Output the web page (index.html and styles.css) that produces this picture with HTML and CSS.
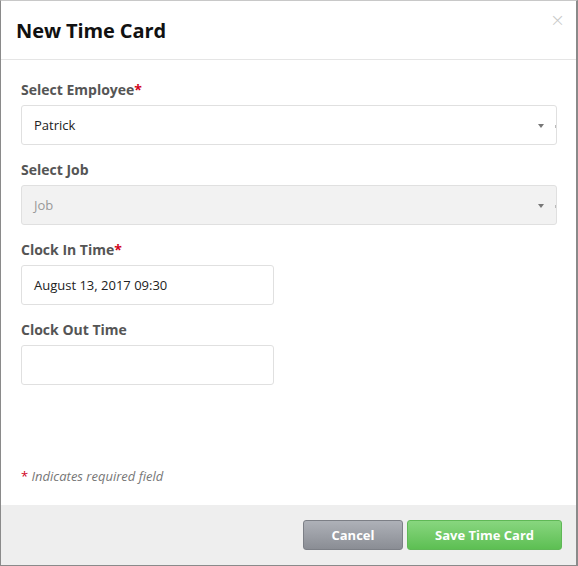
FILE: index.html
```html
<!DOCTYPE html>
<html>
<head>
<meta charset="utf-8">
<link rel="stylesheet" href="styles.css">
</head>
<body>
<div class="modal">
  <div class="modal-header">
    <h1 class="title">New Time Card</h1>
    <span class="close">&times;</span>
  </div>
  <div class="modal-body">
    <div class="group">
      <label class="label">Select Employee<span class="req">*</span></label>
      <div class="field select">
        <span class="value">Patrick</span>
        <span class="arrow"></span>
        <span class="tick"></span>
      </div>
    </div>
    <div class="group">
      <label class="label">Select Job</label>
      <div class="field select disabled">
        <span class="value placeholder">Job</span>
        <span class="arrow"></span>
        <span class="tick"></span>
      </div>
    </div>
    <div class="group">
      <label class="label">Clock In Time<span class="req">*</span></label>
      <div class="field short">
        <span class="value">August 13, 2017 09:30</span>
      </div>
    </div>
    <div class="group">
      <label class="label">Clock Out Time</label>
      <div class="field short"></div>
    </div>
    <p class="note"><span class="req">*</span> Indicates required field</p>
  </div>
  <div class="modal-footer">
    <button class="btn btn-cancel">Cancel</button>
    <button class="btn btn-save">Save Time Card</button>
  </div>
</div>
</body>
</html>
```
FILE: styles.css
```css
* { box-sizing: border-box; }
html, body { margin: 0; padding: 0; background: #fff; }
body { font-family: "Open Sans", "Noto Sans", sans-serif; }

.modal {
  width: 578px;
  height: 566px;
  border: 1px solid #8a8a8a;
  border-top-color: #c8c8c8;
  border-right-width: 2px;
  display: flex;
  flex-direction: column;
  background: #fff;
}

.modal-header {
  height: 59px;
  border-bottom: 1px solid #e5e5e5;
  padding: 0 11px 0 15px;
  display: flex;
  align-items: center;
  justify-content: space-between;
}
.title {
  margin: 0;
  font-size: 20px;
  font-weight: 700;
  color: #111;
  letter-spacing: -0.1px;
  padding-top: 1px;
}
.close {
  color: #c8c8c8;
  font-size: 18px;
  line-height: 1;
  align-self: flex-start;
  margin-top: 10px;
  font-family: "DejaVu Sans", sans-serif;
  font-weight: 300;
}

.modal-body {
  flex: 1;
  padding: 20px 19px 0 20px;
}
.group { margin-bottom: 15px; }
.label {
  display: block;
  height: 20px;
  line-height: 20px;
  font-size: 14px;
  font-weight: 700;
  color: #555;
  margin-bottom: 5px;
}
.req { color: #d0021b; }

.field {
  height: 40px;
  border: 1px solid #e0e0e0;
  border-radius: 3px;
  display: flex;
  align-items: center;
  padding: 0 12px;
  font-size: 13px;
  color: #222;
  background: #fff;
  position: relative;
}
.field.disabled { background: #f2f2f2; }
.field.short { width: 253px; }
.placeholder { color: #999; }
.arrow {
  position: absolute;
  right: 12px;
  top: 18px;
  width: 0; height: 0;
  border-left: 3.5px solid transparent;
  border-right: 3.5px solid transparent;
  border-top: 4px solid #777;
}
.tick {
  position: absolute;
  right: 0;
  top: 19px;
  width: 1px;
  height: 3px;
  background: #bbb;
}

.note {
  margin: 82px 0 0;
  font-size: 13px;
  line-height: 18px;
  font-style: italic;
  color: #777;
}
.note .req { font-style: normal; }

.modal-footer {
  height: 60px;
  background: #eeeeee;
  display: flex;
  justify-content: flex-end;
  align-items: flex-start;
  gap: 4px;
  padding: 15px 14px 0 0;
}
.btn {
  height: 30px;
  border-radius: 3px;
  font-family: "Open Sans", sans-serif;
  font-size: 13px;
  font-weight: 700;
  color: #fff;
  padding: 0;
  cursor: pointer;
}
.btn-cancel {
  width: 100px;
  border: 1px solid #7c7f86;
  background: linear-gradient(#aeb1b8, #8a8d94);
}
.btn-save {
  width: 155px;
  border: 1px solid #5fb856;
  background: linear-gradient(#88d67f, #5dbf53);
}
```
